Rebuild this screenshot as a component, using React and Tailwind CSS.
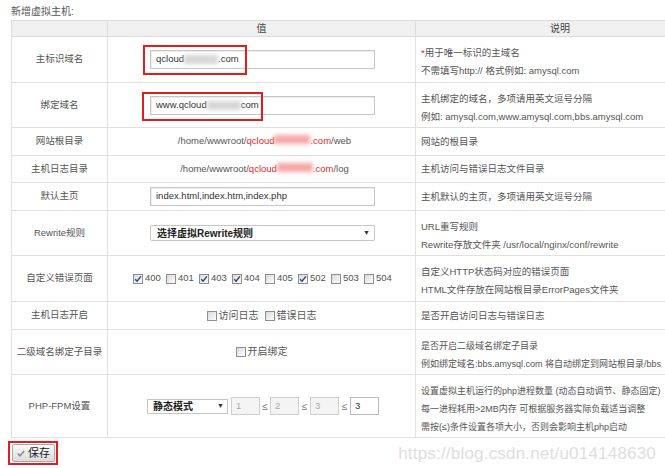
import React from "react";

const FONT = "font-['Liberation_Sans','Noto_Sans_CJK_SC',sans-serif]";

function Box({ checked }) {
  return (
    <span className="inline-flex items-center justify-center w-[10px] h-[10px] border border-[#8e8e8e] bg-linear-to-br from-[#d9d9d9] to-white shrink-0">
      {checked && (
        <svg width="8" height="8" viewBox="0 0 8 8">
          <path d="M1.2 4.2 L3.1 6.2 L6.9 1.4" fill="none" stroke="#27418a" strokeWidth="1.4" />
        </svg>
      )}
    </span>
  );
}

function Blur({ w, color }) {
  return <span className={`inline-block h-[9px] blur-[2px] ${color}`} style={{ width: w }} />;
}

function Input({ children, w = "w-[225px]" }) {
  return (
    <div className={`h-[19px] ${w} border border-[#c6c6c6] bg-white shadow-[inset_1px_1px_1px_rgba(0,0,0,0.08)] text-[9.5px] text-[#333] pl-[5px] flex items-center whitespace-nowrap`}>
      {children}
    </div>
  );
}

function Row({ h, label, value, desc, valueClass = "justify-center", descPt = "pt-[5px]", descSize = "text-[9.5px]" }) {
  return (
    <div className={`grid grid-cols-[97px_308px_288px] border-b border-[#e0e0e0] ${h}`}>
      <div className="border-l border-r border-[#e0e0e0] flex items-center justify-center text-[9.5px] text-[#555]">
        {label}
      </div>
      <div className={`relative border-r border-[#e0e0e0] flex items-center ${valueClass}`}>{value}</div>
      <div className={`flex flex-col justify-center pl-[5px] leading-[18px] text-[#555] whitespace-nowrap ${descSize} ${descPt}`}>
        {desc}
      </div>
    </div>
  );
}

function CheckItem({ checked, label, w }) {
  return (
    <span className={`inline-flex items-center gap-[2px] ${w || ""}`}>
      <Box checked={checked} />
      <span className="text-[9.5px] text-[#555]">{label}</span>
    </span>
  );
}

function SmallInput({ val, disabled }) {
  return (
    <div
      className={`h-[18px] w-[29px] border ${disabled ? "border-[#cfcfcf] bg-[#f4f4f4] text-[#aaa]" : "border-[#bdbdbd] bg-white text-[#333]"} text-[9.5px] pl-[4px] flex items-center`}
    >
      {val}
    </div>
  );
}

export default function App() {
  const codes = [
    ["400", true],
    ["401", false],
    ["403", true],
    ["404", true],
    ["405", false],
    ["502", true],
    ["503", false],
    ["504", false],
  ];
  return (
    <div className={`relative w-[665px] h-[468px] overflow-hidden bg-white ${FONT}`}>
      <div className="h-[20px] pl-[11px] pt-[6px] text-[10px] leading-[11px] text-[#555]">新增虚拟主机:</div>
      <div className="ml-[11px] w-[693px]">
        <div className="grid grid-cols-[97px_308px_288px] h-[17px] bg-[#f0f0f0] border-t border-b border-[#dcdcdc] text-[10px] text-[#444]">
          <div className="border-l border-r border-[#dcdcdc]" />
          <div className="border-r border-[#dcdcdc] flex items-center justify-center">值</div>
          <div className="flex items-center justify-center">说明</div>
        </div>

        <Row
          h="h-[46px]"
          label="主标识域名"
          valueClass="justify-start pl-[42px]"
          value={
            <>
              <Input>
                qcloud
                <Blur w="34px" color="bg-[#d6d6d6]" />
                .com
              </Input>
              <div className="absolute left-[35px] top-[8px] w-[104px] h-[30px] border-2 border-[#e01e1e]" />
            </>
          }
          desc={
            <>
              <div>
                <span className="text-[#e02020]">*</span>用于唯一标识的主域名
              </div>
              <div>不需填写http:// 格式例如: amysql.com</div>
            </>
          }
        />

        <Row
          h="h-[45px]"
          label="绑定域名"
          valueClass="justify-start pl-[42px]"
          value={
            <>
              <Input>
                www.qcloud
                <Blur w="34px" color="bg-[#d6d6d6]" />
                com
              </Input>
              <div className="absolute left-[34px] top-[9px] w-[121px] h-[29px] border-2 border-[#e01e1e]" />
            </>
          }
          desc={
            <>
              <div>主机绑定的域名，多项请用英文逗号分隔</div>
              <div>例如: amysql.com,www.amysql.com,bbs.amysql.com</div>
            </>
          }
        />

        <Row
          h="h-[28px]"
          label="网站根目录"
          descPt="pt-0"
          value={
            <span className="text-[9.5px] text-[#555] whitespace-nowrap pl-[6px]">
              /home/wwwroot/<span className="text-[#e02828]">qcloud</span>
              <Blur w="36px" color="bg-[#f6a6a6]" />
              <span className="text-[#e02828]">.com</span>/web
            </span>
          }
          desc={<div>网站的根目录</div>}
        />

        <Row
          h="h-[27px]"
          label="主机日志目录"
          descPt="pt-0"
          value={
            <span className="text-[9.5px] text-[#555] whitespace-nowrap pl-[6px]">
              /home/wwwroot/<span className="text-[#e02828]">qcloud</span>
              <Blur w="36px" color="bg-[#f6a6a6]" />
              <span className="text-[#e02828]">.com</span>/log
            </span>
          }
          desc={<div>主机访问与错误日志文件目录</div>}
        />

        <Row
          h="h-[28px]"
          label="默认主页"
          descPt="pt-0"
          valueClass="justify-start pl-[42px]"
          value={<Input>index.html,index.htm,index.php</Input>}
          desc={<div>主机默认的主页，多项请用英文逗号分隔</div>}
        />

        <Row
          h="h-[45px]"
          label="Rewrite规则"
          valueClass="justify-start pl-[42px]"
          value={
            <div className="h-[16px] w-[225px] border border-[#c6c6c6] rounded-[2px] bg-white flex items-center justify-between pl-[6px] pr-[4px] text-[10px] font-bold text-[#222]">
              <span>选择虚拟Rewrite规则</span>
              <span className="text-[7px] text-[#333]">▼</span>
            </div>
          }
          desc={
            <>
              <div>URL重写规则</div>
              <div>Rewrite存放文件夹 /usr/local/nginx/conf/rewrite</div>
            </>
          }
        />

        <Row
          h="h-[46px]"
          label="自定义错误页面"
          valueClass="justify-start pl-[25px]"
          value={
            <div className="flex items-center">
              {codes.map(([c, ch]) => (
                <CheckItem key={c} checked={ch} label={c} w="w-[33px]" />
              ))}
            </div>
          }
          desc={
            <>
              <div>自定义HTTP状态码对应的错误页面</div>
              <div>HTML文件存放在网站根目录ErrorPages文件夹</div>
            </>
          }
        />

        <Row
          h="h-[28px]"
          label="主机日志开启"
          descPt="pt-0"
          value={
            <div className="flex items-center gap-[6px] text-[10px]">
              <CheckItem label={<span className="text-[10px]">访问日志</span>} />
              <CheckItem label={<span className="text-[10px]">错误日志</span>} />
            </div>
          }
          desc={<div>是否开启访问日志与错误日志</div>}
        />

        <Row
          h="h-[45px]"
          label="二级域名绑定子目录"
          descSize="text-[9px]"
          value={<CheckItem label={<span className="text-[10px]">开启绑定</span>} />}
          desc={
            <>
              <div>是否开启二级域名绑定子目录</div>
              <div>例如绑定域名:bbs.amysql.com 将自动绑定到网站根目录/bbs</div>
            </>
          }
        />

        <Row
          h="h-[63px]"
          label="PHP-FPM设置"
          descSize="text-[9px]"
          valueClass="justify-start pl-[39px]"
          value={
            <div className="flex items-center text-[10px] text-[#777]">
              <div className="h-[15px] w-[81px] border border-[#c6c6c6] bg-white flex items-center justify-between pl-[5px] pr-[3px] text-[10px] font-bold text-[#222]">
                <span>静态模式</span>
                <span className="text-[7px] text-[#333]">▼</span>
              </div>
              <div className="ml-[3px]">
                <SmallInput val="1" disabled />
              </div>
              <span className="w-[10px] text-center">≤</span>
              <SmallInput val="2" disabled />
              <span className="w-[11px] text-center">≤</span>
              <SmallInput val="3" disabled />
              <span className="w-[11px] text-center">≤</span>
              <SmallInput val="3" />
            </div>
          }
          desc={
            <>
              <div>设置虚拟主机运行的php进程数量 (动态自动调节、静态固定)</div>
              <div>每一进程耗用&gt;2MB内存 可根据服务器实际负载适当调整</div>
              <div>需按(≤)条件设置各项大小，否则会影响主机php启动</div>
            </>
          }
        />
      </div>

      <div className="ml-[8px] mt-[3px] w-[50px] h-[24px] border-2 border-[#e01e1e] pl-[2px] pt-[1px]">
        <button className="w-[43px] h-[18px] border border-[#a9a9a9] rounded-[2px] bg-linear-to-b from-[#fafafa] to-[#dcdcdc] flex items-center justify-center gap-[3px] text-[11px] text-[#222]">
          <svg width="8" height="7" viewBox="0 0 8 7">
            <path d="M0.8 3.6 L3 5.8 L7.2 1" fill="none" stroke="#8a8a8a" strokeWidth="1.5" />
          </svg>
          <span>保存</span>
        </button>
      </div>

      <div className="absolute right-[9px] bottom-[2px] text-[17px] text-[#dedede] tracking-[0.2px]">
        https://blog.csdn.net/u014148630
      </div>
    </div>
  );
}
